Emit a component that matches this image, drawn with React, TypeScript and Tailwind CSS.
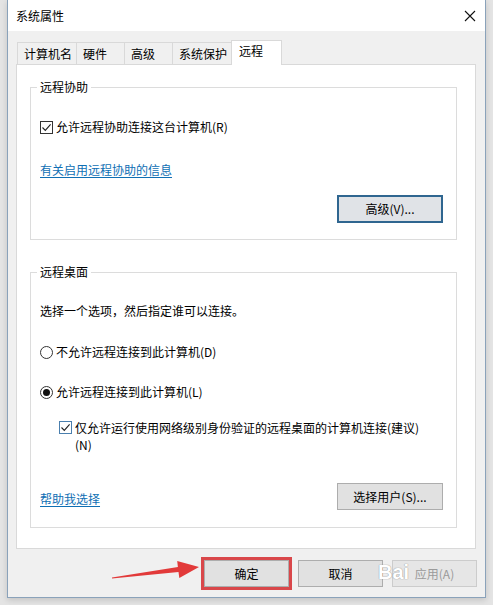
import React from "react";

const font = { fontFamily: '"Noto Sans CJK SC", "Microsoft YaHei", sans-serif' };

const Check = ({ color = "#333333" }: { color?: string }) => (
  <span
    className="w-[13px] h-[13px] border bg-white flex items-center justify-center shrink-0"
    style={{ borderColor: color }}
  >
    <svg width="11" height="11" viewBox="0 0 11 11">
      <path d="M1.5 5.5 L4.3 8.4 L9.6 2.3" fill="none" stroke="#222" strokeWidth="1.1" />
    </svg>
  </span>
);

const Radio = ({ on }: { on?: boolean }) => (
  <span className="w-[13px] h-[13px] rounded-full border border-[#333333] bg-white flex items-center justify-center shrink-0">
    {on && <span className="w-[7px] h-[7px] rounded-full bg-[#111111]" />}
  </span>
);

const tabs = [
  { name: "计算机名", w: "w-[59px]" },
  { name: "硬件", w: "w-[48px]" },
  { name: "高级", w: "w-[48px]" },
  { name: "系统保护", w: "w-[59px]" },
];

export default function App() {
  return (
    <div
      className="relative w-[493px] h-[605px] bg-[#e4e4e4] overflow-hidden text-[12px] leading-[16px] text-black"
      style={font}
    >
      <div className="ml-[7px] w-[479px] h-[598px] border-l border-r border-b border-[#8aa2ba] bg-[#f0f0f0] flex flex-col shadow-[0_2px_6px_rgba(0,0,0,0.15)]">
        {/* title bar */}
        <div className="h-[31px] bg-white flex items-center justify-between pl-[8px] pr-[9px]">
          <span>系统属性</span>
          <svg width="12" height="12" viewBox="0 0 12 12">
            <path d="M1 1 L11 11 M11 1 L1 11" stroke="#111" strokeWidth="1.1" />
          </svg>
        </div>

        {/* tabs */}
        <div className="mt-[9px] ml-[9px] flex items-end h-[24px]">
          {tabs.map((t) => (
            <div
              key={t.name}
              className={`${t.w} h-[22px] border-t border-l border-[#d9d9d9] bg-[#f0f0f0] pl-[6px] flex items-center`}
            >
              {t.name}
            </div>
          ))}
          <div className="w-[51px] h-[25px] -mb-px relative z-10 border border-b-0 border-[#d9d9d9] bg-white pl-[7px] pb-[4px] flex items-center">
            远程
          </div>
        </div>

        {/* panel */}
        <div className="ml-[8px] w-[460px] h-[485px] border border-[#d9d9d9] bg-white pl-[13px] pr-[18px] pt-[14px]">
          <fieldset className="border border-[#dcdcdc] pl-[9px] pr-[13px] pb-[16px]">
            <legend className="ml-[-3px] px-[3px]">远程协助</legend>
            <label className="mt-[24px] flex items-center gap-[3px] h-[16px]">
              <Check />
              <span>允许远程协助连接这台计算机(R)</span>
            </label>
            <div className="mt-[27px] h-[16px]">
              <span className="text-[#0f6fb4] underline underline-offset-2">有关启用远程协助的信息</span>
            </div>
            <div className="mt-[17px] flex justify-end">
              <button className="w-[106px] h-[28px] border-2 border-[#2f6690] bg-[#e0e3e7]">高级(V)...</button>
            </div>
          </fieldset>

          <fieldset className="mt-[24px] border border-[#dcdcdc] pl-[9px] pr-[13px] pb-[17px]">
            <legend className="ml-[-3px] px-[3px]">远程桌面</legend>
            <div className="mt-[23px] h-[16px]">选择一个选项，然后指定谁可以连接。</div>
            <label className="mt-[25px] flex items-center gap-[3px] h-[16px]">
              <Radio />
              <span>不允许远程连接到此计算机(D)</span>
            </label>
            <label className="mt-[24px] flex items-center gap-[3px] h-[16px]">
              <Radio on />
              <span>允许远程连接到此计算机(L)</span>
            </label>
            <label className="mt-[19px] ml-[19px] flex items-start gap-[3px] leading-[17px]">
              <span className="pt-[2px]">
                <Check color="#4a7fae" />
              </span>
              <span>
                仅允许运行使用网络级别身份验证的远程桌面的计算机连接(建议)
                <br />
                (N)
              </span>
            </label>
            <div className="mt-[30px] flex items-center justify-between">
              <span className="text-[#0f6fb4] underline underline-offset-2 mt-[4px]">帮助我选择</span>
              <button className="w-[106px] h-[27px] border border-[#adadad] bg-[#e1e1e1]">选择用户(S)...</button>
            </div>
          </fieldset>
        </div>

        {/* bottom buttons */}
        <div className="mt-[11px] flex justify-end gap-[9px] pr-[8px]">
          <button className="w-[85px] h-[27px] border border-[#adadad] bg-[#e1e1e1] outline-[3px] outline-solid outline-[#d9474a]">
            确定
          </button>
          <button className="w-[85px] h-[27px] border border-[#adadad] bg-[#e1e1e1]">取消</button>
          <button className="w-[85px] h-[27px] border border-[#cccccc] bg-[#e6e6e6] text-[#9a9a9a]">应用(A)</button>
        </div>
      </div>

      {/* watermark */}
      <span
        className="absolute left-[378px] top-[562px] text-[20px] leading-[20px] font-bold text-white pointer-events-none [text-shadow:0_0_1px_#9a9a9a,0_0_1px_#9a9a9a]"
        style={{ fontFamily: '"Liberation Sans", sans-serif' }}
      >
        Bai
      </span>

      {/* red arrow annotation */}
      <svg className="absolute left-0 top-0 pointer-events-none" width="493" height="605" viewBox="0 0 493 605">
        <polygon
          points="112,577.6 177.9,567 177.2,561 199,567 179.3,578 178.5,572 112,578.6"
          fill="#e23a3a"
        />
      </svg>
    </div>
  );
}
